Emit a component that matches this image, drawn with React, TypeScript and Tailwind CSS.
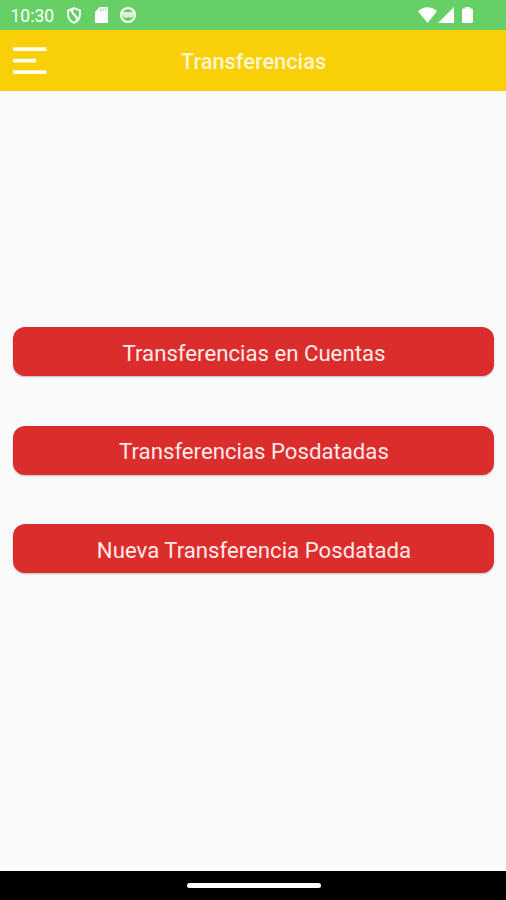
const options = ['Transferencias en Cuentas', 'Transferencias Posdatadas', 'Nueva Transferencia Posdatada']

function StatusBar() {
  return (
    <div className="h-[30px] shrink-0 bg-[#66d066] flex items-center pl-[10.5px] pr-[33px] text-white">
      <span className="w-[56.5px] text-[17.5px] leading-none pt-[3px]">10:30</span>

      {/* Notifications */}
      <svg className="w-[14px] h-[17px]" viewBox="0 0 14 17" fill="none" stroke="currentColor">
        <path d="M7 1.200 12.900 3.400v4.200c0 3.700-2.300 6.800-5.900 8.200C3.400 14.400 1.100 11.300 1.100 7.600V3.400z" strokeWidth="1.800" />
        <path d="M6.200 2C4 5.200 5 6.600 7.300 8.200s3.300 3.400 1.700 6.400M3.800 3.500l8 9" strokeWidth="1.500" />
      </svg>
      <svg className="ml-[13.500px] w-[13px] h-[16px]" viewBox="0 0 13 16">
        <path d="M4.800 0h6.900c.8 0 1.300.5 1.300 1.300v13.400c0 .8-.5 1.300-1.300 1.300H1.300C.5 16 0 15.500 0 14.700V5z" fill="currentColor" />
        <path d="M5.500 1.500v2.500M8 1.500v2.500M10.500 1.500v2.500" stroke="#66d066" strokeWidth=".8" />
      </svg>
      <svg className="ml-[12.500px] w-[16px] h-[16px]" viewBox="0 0 16 16">
        <circle cx="8" cy="8" r="7" fill="none" stroke="currentColor" strokeWidth="2" />
        <path d="M1.500 5h13l-1 4-2.500 2.200L9 9.800l-1.500.6-3 .3L2.500 9z" fill="currentColor" fillOpacity=".75" />
      </svg>

      {/* Wifi, signal, battery */}
      <svg className="ml-auto w-[19px] h-[16px]" viewBox="0 0 19 16" fill="currentColor">
        <path d="M9.500 16 0 4.200C5.500-1.200 13.500-1.200 19 4.200z" />
      </svg>
      <svg className="ml-px w-[16px] h-[16px]" viewBox="0 0 16 16" fill="currentColor">
        <path d="M16 0v16H0z" />
      </svg>
      <svg className="ml-[8px] w-[11px] h-[16px]" viewBox="0 0 11 16" fill="currentColor">
        <path d="M3 0h5v1.500h1.500c.8 0 1.500.7 1.500 1.500v11.500c0 .9-.6 1.500-1.500 1.500h-8C.6 16 0 15.400 0 14.500V3c0-.8.700-1.500 1.500-1.500H3z" />
      </svg>
    </div>
  )
}

function MenuIcon() {
  return (
    <svg className="w-[34px] h-[28px]" viewBox="0 0 34 28" fill="#fffdf0">
      <rect y=".2" width="33.500" height="3.800" rx=".5" />
      <rect y="11.800" width="23.200" height="3.800" rx=".5" />
      <rect y="23.200" width="33.500" height="3.800" rx=".5" />
    </svg>
  )
}

export default function App() {
  return (
    <div className="w-full h-screen flex flex-col bg-[#fafafa] font-['Roboto',sans-serif]">
      <StatusBar />
      <header className="h-[61px] shrink-0 bg-[#f9cf07] grid grid-cols-[34px_1fr_34px] items-center px-[12.5px]">
        <button>
          <MenuIcon />
        </button>
        <h1 className="pt-[3px] pl-px text-center text-[21.8px] font-medium text-[#fff6cf]">Transferencias</h1>
      </header>
      <main className="flex-1 pl-[13px] pr-[12px] pt-[236.4px] flex flex-col gap-[49.5px]">
        {options.map((label) => (
          <button
            key={label}
            className="h-[49px] shrink-0 rounded-xl bg-[#dc2d2d] pt-[3px] pl-px text-[22.2px] text-[#ffeaea] shadow-[0_1px_2px_rgba(0,0,0,0.25)]"
          >
            {label}
          </button>
        ))}
      </main>
      <div className="h-[29px] shrink-0 bg-black flex items-center justify-center">
        <div className="w-[134px] h-[5px] ml-px rounded-full bg-white" />
      </div>
    </div>
  )
}
